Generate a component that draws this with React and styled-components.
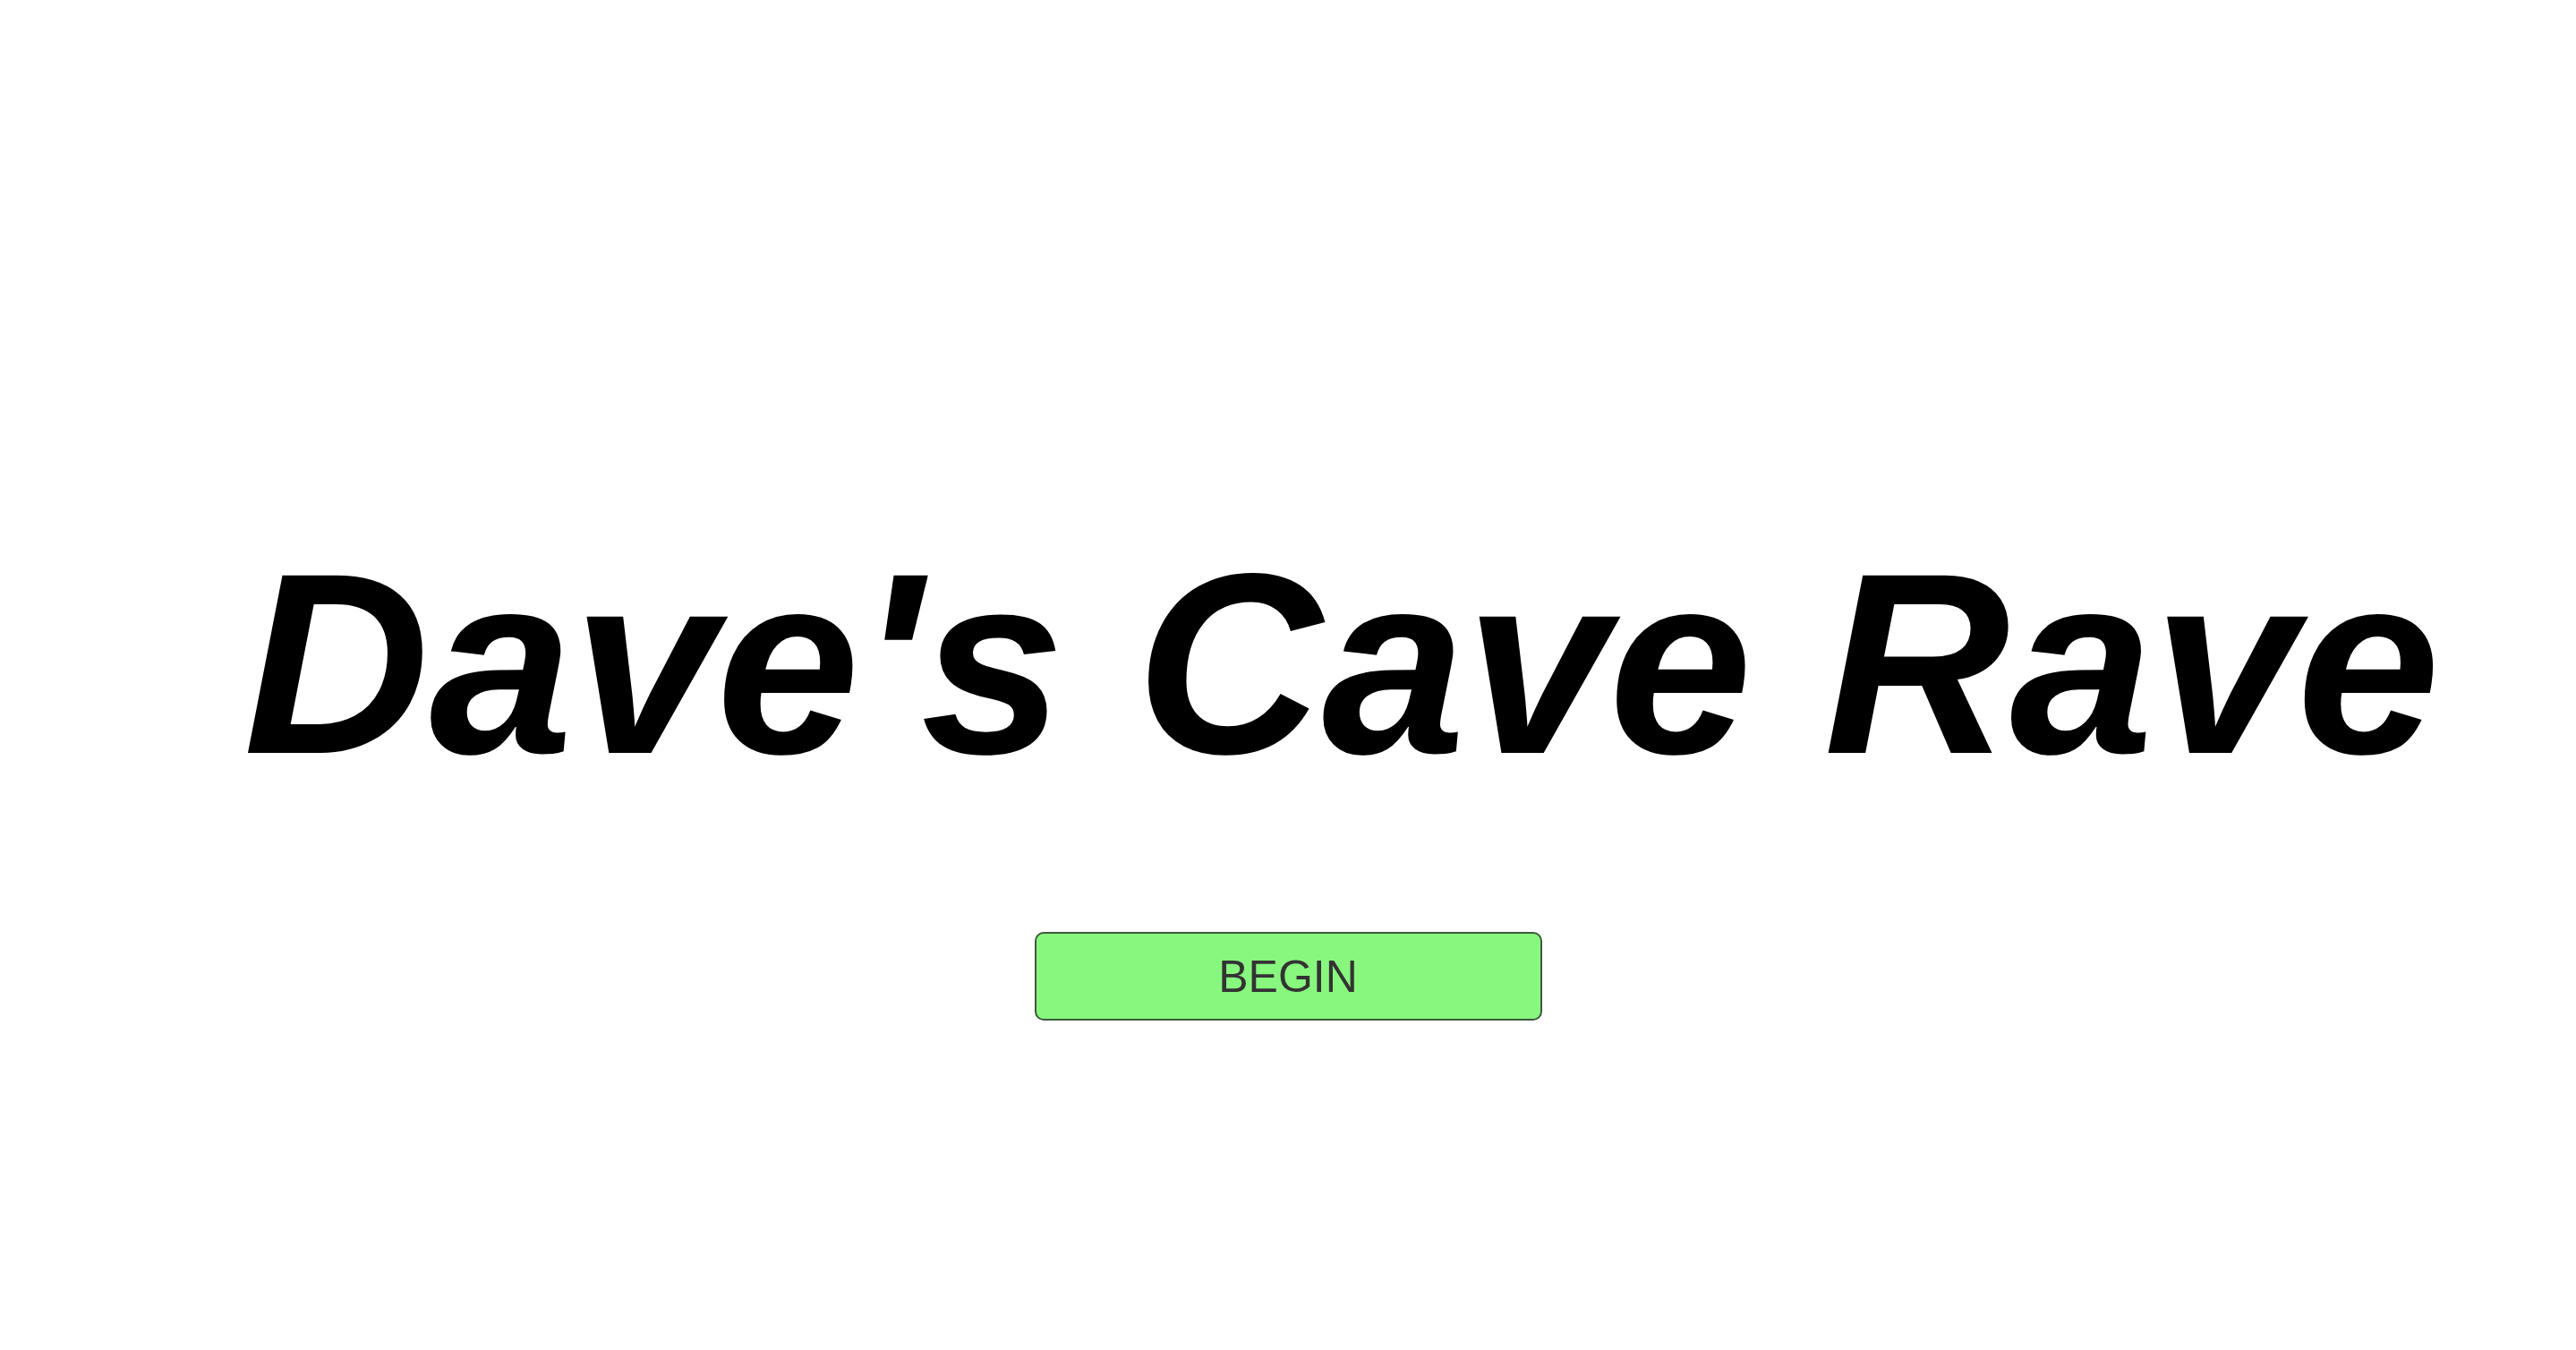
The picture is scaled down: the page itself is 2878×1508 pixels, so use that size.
import React from 'react';
import styled, { createGlobalStyle } from 'styled-components';

const GlobalStyle = createGlobalStyle`
  html, body {
    margin: 0;
    padding: 0;
    background: #ffffff;
    font-family: "Liberation Sans", Arial, sans-serif;
  }
`;

const Page = styled.div`
  min-height: 100vh;
  display: flex;
  flex-direction: column;
  align-items: center;
  padding-top: 576px;
  box-sizing: border-box;
`;

const Title = styled.h1`
  margin: 0;
  font-size: 288px;
  font-weight: 700;
  font-style: italic;
  line-height: normal;
  color: #000;
  white-space: nowrap;
  padding-left: 120px;
`;

const BeginButton = styled.button`
  margin-top: 134px;
  width: 567px;
  height: 99px;
  background: #88f77e;
  border: 2px solid #3d5a3d;
  border-radius: 10px;
  color: #333;
  font-family: "Liberation Sans", Arial, sans-serif;
  font-size: 50px;
  cursor: pointer;
`;

const App = () => {
  return (
    <Page>
      <GlobalStyle />
      <Title>Dave's Cave Rave</Title>
      <BeginButton>BEGIN</BeginButton>
    </Page>
  );
};

export default App;
